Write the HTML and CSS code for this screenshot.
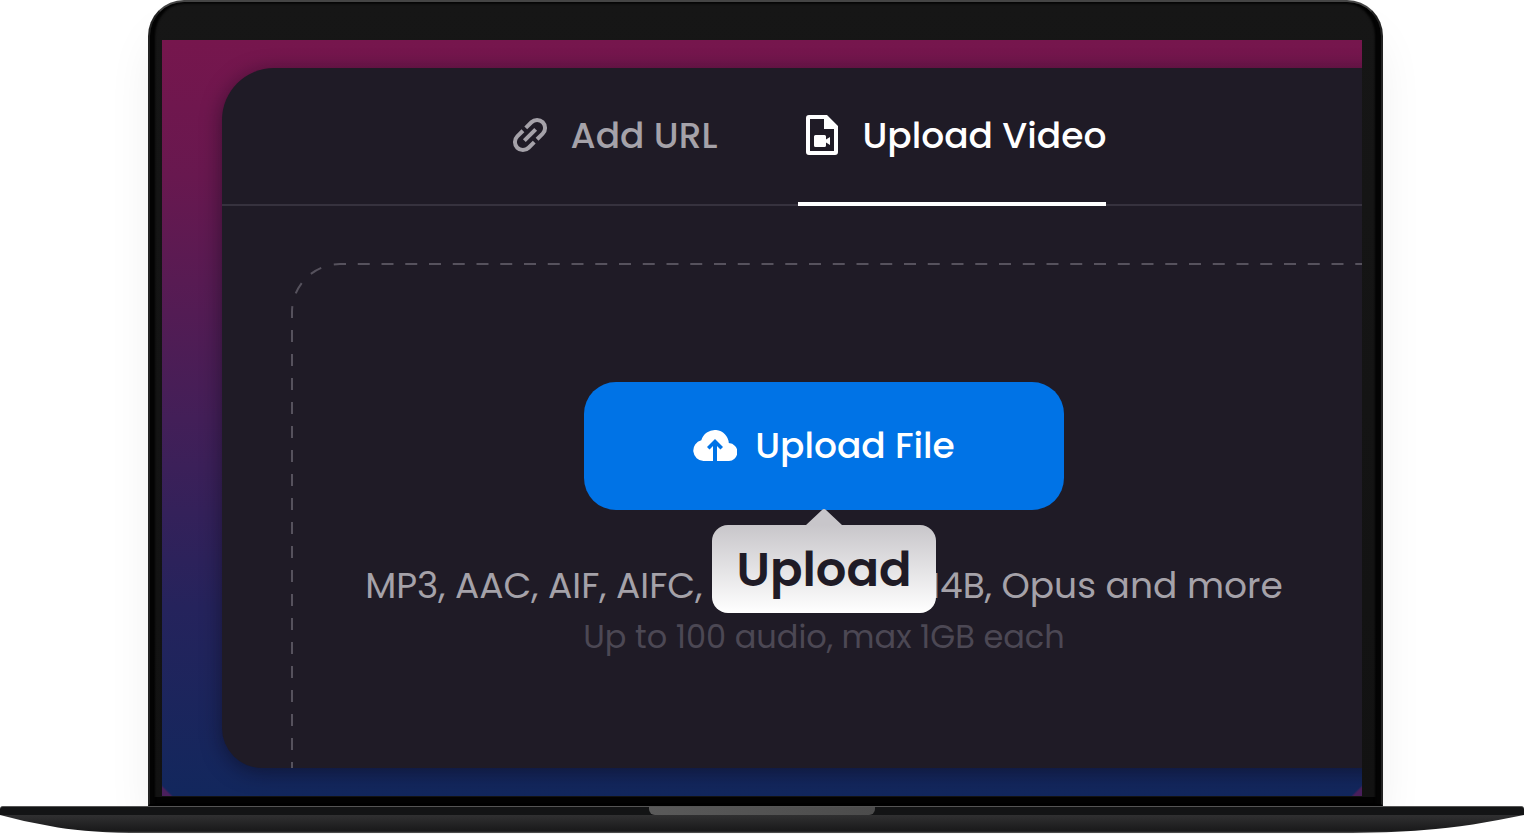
FILE: index.html
```html
<!DOCTYPE html>
<html lang="en">
<head>
<meta charset="utf-8">
<title>Upload Video</title>
<link rel="stylesheet" href="styles.css">
</head>
<body>
<main class="laptop">
  <div class="lid">
    <div class="screen">
      <section class="panel">
        <nav class="tabs">
          <button class="tab" type="button">
            <svg class="tab-icon" viewBox="0 0 36 36" aria-hidden="true">
              <g transform="rotate(-45 18 18)" fill="none" stroke="currentColor" stroke-width="4">
                <path d="M16 10H8a8 8 0 0 0 0 16H16"/>
                <path d="M20 10H28a8 8 0 0 1 0 16H20"/>
                <path d="M10 18H26"/>
              </g>
            </svg>
            <span>Add URL</span>
          </button>
          <button class="tab tab-active" type="button">
            <svg class="tab-icon-file" viewBox="0 0 32 40" aria-hidden="true">
              <path fill="currentColor" fill-rule="evenodd" d="M3 0H21L32 11V37a3 3 0 0 1-3 3H3a3 3 0 0 1-3-3V3a3 3 0 0 1 3-3ZM4 4V36H28V14H18V4Z"/>
              <path fill="currentColor" d="M9.500 20H18.500a1.500 1.500 0 0 1 1.500 1.500V24.500L24 22V30L20 27.500V30.500a1.500 1.500 0 0 1-1.500 1.500H9.500A1.500 1.500 0 0 1 8 30.500V21.500A1.500 1.500 0 0 1 9.500 20Z"/>
            </svg>
            <span>Upload Video</span>
          </button>
        </nav>
        <div class="dropzone">
          <svg class="dashes" aria-hidden="true">
            <path class="dash-side" d="M1 49V1200"/>
            <path class="dash-corner" d="M1 49A48 48 0 0 1 49 1"/>
            <path class="dash-top" d="M49 1H3000"/>
          </svg>
          <div class="upload">
            <button class="upload-button" type="button" aria-describedby="upload-tip">
              <svg class="cloud" viewBox="0 0 44 32" aria-hidden="true">
                <path fill="currentColor" d="M20 32H10.500A10.500 10.500 0 0 1 8.300 11.300A14 14 0 0 1 35.800 14A9 9 0 0 1 35 32H24V17L27.500 20.500L30 18L22 10L14 18L16.500 20.500L20 17Z"/>
              </svg>
              <span>Upload File</span>
            </button>
            <span class="tooltip" id="upload-tip" role="tooltip">
              <svg class="bubble-tip" viewBox="0 0 36 16" aria-hidden="true"><path fill="#c8c6ca" d="M0 16L16 1Q18-1 20 1L36 16Z"/></svg>
              <span class="bubble">Upload</span>
            </span>
          </div>
          <p class="formats">MP3, AAC, AIF, AIFC, FLAC, M4A, M4B, Opus and more</p>
          <p class="limits">Up to 100 audio, max 1GB each</p>
        </div>
      </section>
    </div>
  </div>
  <div class="base">
    <div class="deck"><div class="notch"></div></div>
    <svg class="underside" viewBox="0 0 1524 19" preserveAspectRatio="none" aria-hidden="true">
      <defs>
        <linearGradient id="metal" x1="0" y1="0" x2="0" y2="1">
          <stop offset="0" stop-color="#303031"/>
          <stop offset="0.900" stop-color="#19191a"/>
          <stop offset="1" stop-color="#5c5c5c"/>
        </linearGradient>
      </defs>
      <path fill="url(#metal)" d="M0 0H1524C1490 7 1455 13 1424 15Q1390 18 1340 18H130Q80 17 50 11Q25 7 0 0Z"/>
    </svg>
  </div>
</main>
</body>
</html>
```
FILE: styles.css
```css
* {
  box-sizing: border-box;
}

body {
  margin: 0;
  background: #fff;
  font-family: Poppins, Inter, sans-serif;
  overflow: hidden;
}

button {
  border: 0;
  background: none;
  font: inherit;
  cursor: pointer;
}

.laptop {
  display: flex;
  flex-direction: column;
  min-height: 100vh;
}

.lid {
  flex: 1;
  display: flex;
  margin: 0 141px 0 148px;
  padding: 38px 19px 8px 12px;
  border: 2px solid #454545;
  border-bottom-color: #000;
  border-left-color: #222;
  border-right-color: #222;
  border-radius: 36px 36px 0 0;
  background: linear-gradient(to bottom, #161616, #121212);
  box-shadow: inset 6px 0 2px -1px #030303, inset -7px 0 2px -1px #030303, inset 0 -7px 0 #020202, inset 0 2px 2px #080808, 0 30px 50px -10px rgba(0, 0, 0, 0.1);
}

.screen {
  flex: 1;
  display: flex;
  min-width: 0;
  overflow: hidden;
  background:
    linear-gradient(45deg, #4a1f5c 6px, transparent 8px),
    linear-gradient(-45deg, #4a1f5c 6px, transparent 8px),
    linear-gradient(to bottom, #76164d 0, #68184f 18%, #431f58 50%, #25235c 75%, #12275d 100%);
}

.panel {
  flex: 1;
  display: flex;
  flex-direction: column;
  margin: 28px -64px 28px 60px;
  border-radius: 52px 0 0 40px;
  background: #1f1b26;
  box-shadow: 0 4px 20px rgba(10, 8, 20, 0.5);
}

.tabs {
  display: flex;
  justify-content: center;
  gap: 81px;
  height: 138px;
  padding-right: 30px;
  border-bottom: 2px solid #36323e;
}

.tab {
  display: flex;
  align-items: center;
  height: 138px;
  padding: 0 0 4px;
  color: #a5a2a9;
  font-size: 36px;
  font-weight: 500;
  white-space: nowrap;
}

.tab-active {
  padding: 0 0 0 8px;
  border-bottom: 4px solid #fff;
  color: #fff;
}

.tab-icon {
  width: 36px;
  height: 36px;
  margin-right: 23px;
}

.tab-icon-file {
  width: 32px;
  height: 40px;
  margin-right: 24px;
}

.dropzone {
  flex: 1;
  position: relative;
  display: flex;
  flex-direction: column;
  align-items: center;
  margin: 57px 0 0 69px;
  padding: 119px 69px 0 0;
}

.dashes {
  position: absolute;
  inset: 0;
  width: 100%;
  height: 100%;
  fill: none;
  stroke: #56525d;
  stroke-width: 2;
}

.dash-side {
  stroke-dasharray: 12 12;
  stroke-dashoffset: 6;
}

.dash-corner {
  stroke-dasharray: 6 13 12 13 12 13 7 100;
}

.dash-top {
  stroke-dasharray: 12 11.75;
  stroke-dashoffset: 6;
}

.upload {
  position: relative;
}

.upload-button {
  display: flex;
  align-items: center;
  justify-content: center;
  gap: 18px;
  width: 480px;
  height: 128px;
  padding: 0 0 2px;
  border-radius: 32px;
  background: #0073e6;
  color: #fff;
  font-size: 36px;
  font-weight: 500;
}

.cloud {
  width: 44px;
  height: 32px;
}

.tooltip {
  position: absolute;
  top: 100%;
  left: 50%;
  display: flex;
  flex-direction: column;
  align-items: center;
  transform: translate(-50%, -1px);
}

.bubble-tip {
  width: 36px;
  height: 16px;
}

.bubble {
  width: 224px;
  height: 88px;
  border-radius: 16px;
  background: linear-gradient(to bottom, #c8c6ca, #fff);
  color: #1f1b26;
  font-size: 48px;
  font-weight: 600;
  line-height: 90px;
  text-align: center;
}

.formats,
.limits {
  margin: 0;
  white-space: nowrap;
}

.formats {
  margin-top: 50px;
  color: #a5a2a9;
  font-size: 36px;
  line-height: 52px;
}

.limits {
  color: #4c4854;
  font-size: 32px;
  line-height: 50px;
}

.base {
  display: flex;
  flex-direction: column;
}

.deck {
  display: flex;
  justify-content: center;
  height: 9px;
  border-top: 1px solid #555;
  border-radius: 3px 3px 0 0;
  background: #131415;
}

.notch {
  width: 226px;
  border-radius: 0 0 6px 6px;
  background: linear-gradient(to right, #5a5a5a, #4c4c4c);
}

.underside {
  display: block;
  width: 100%;
  height: 19px;
}
```
